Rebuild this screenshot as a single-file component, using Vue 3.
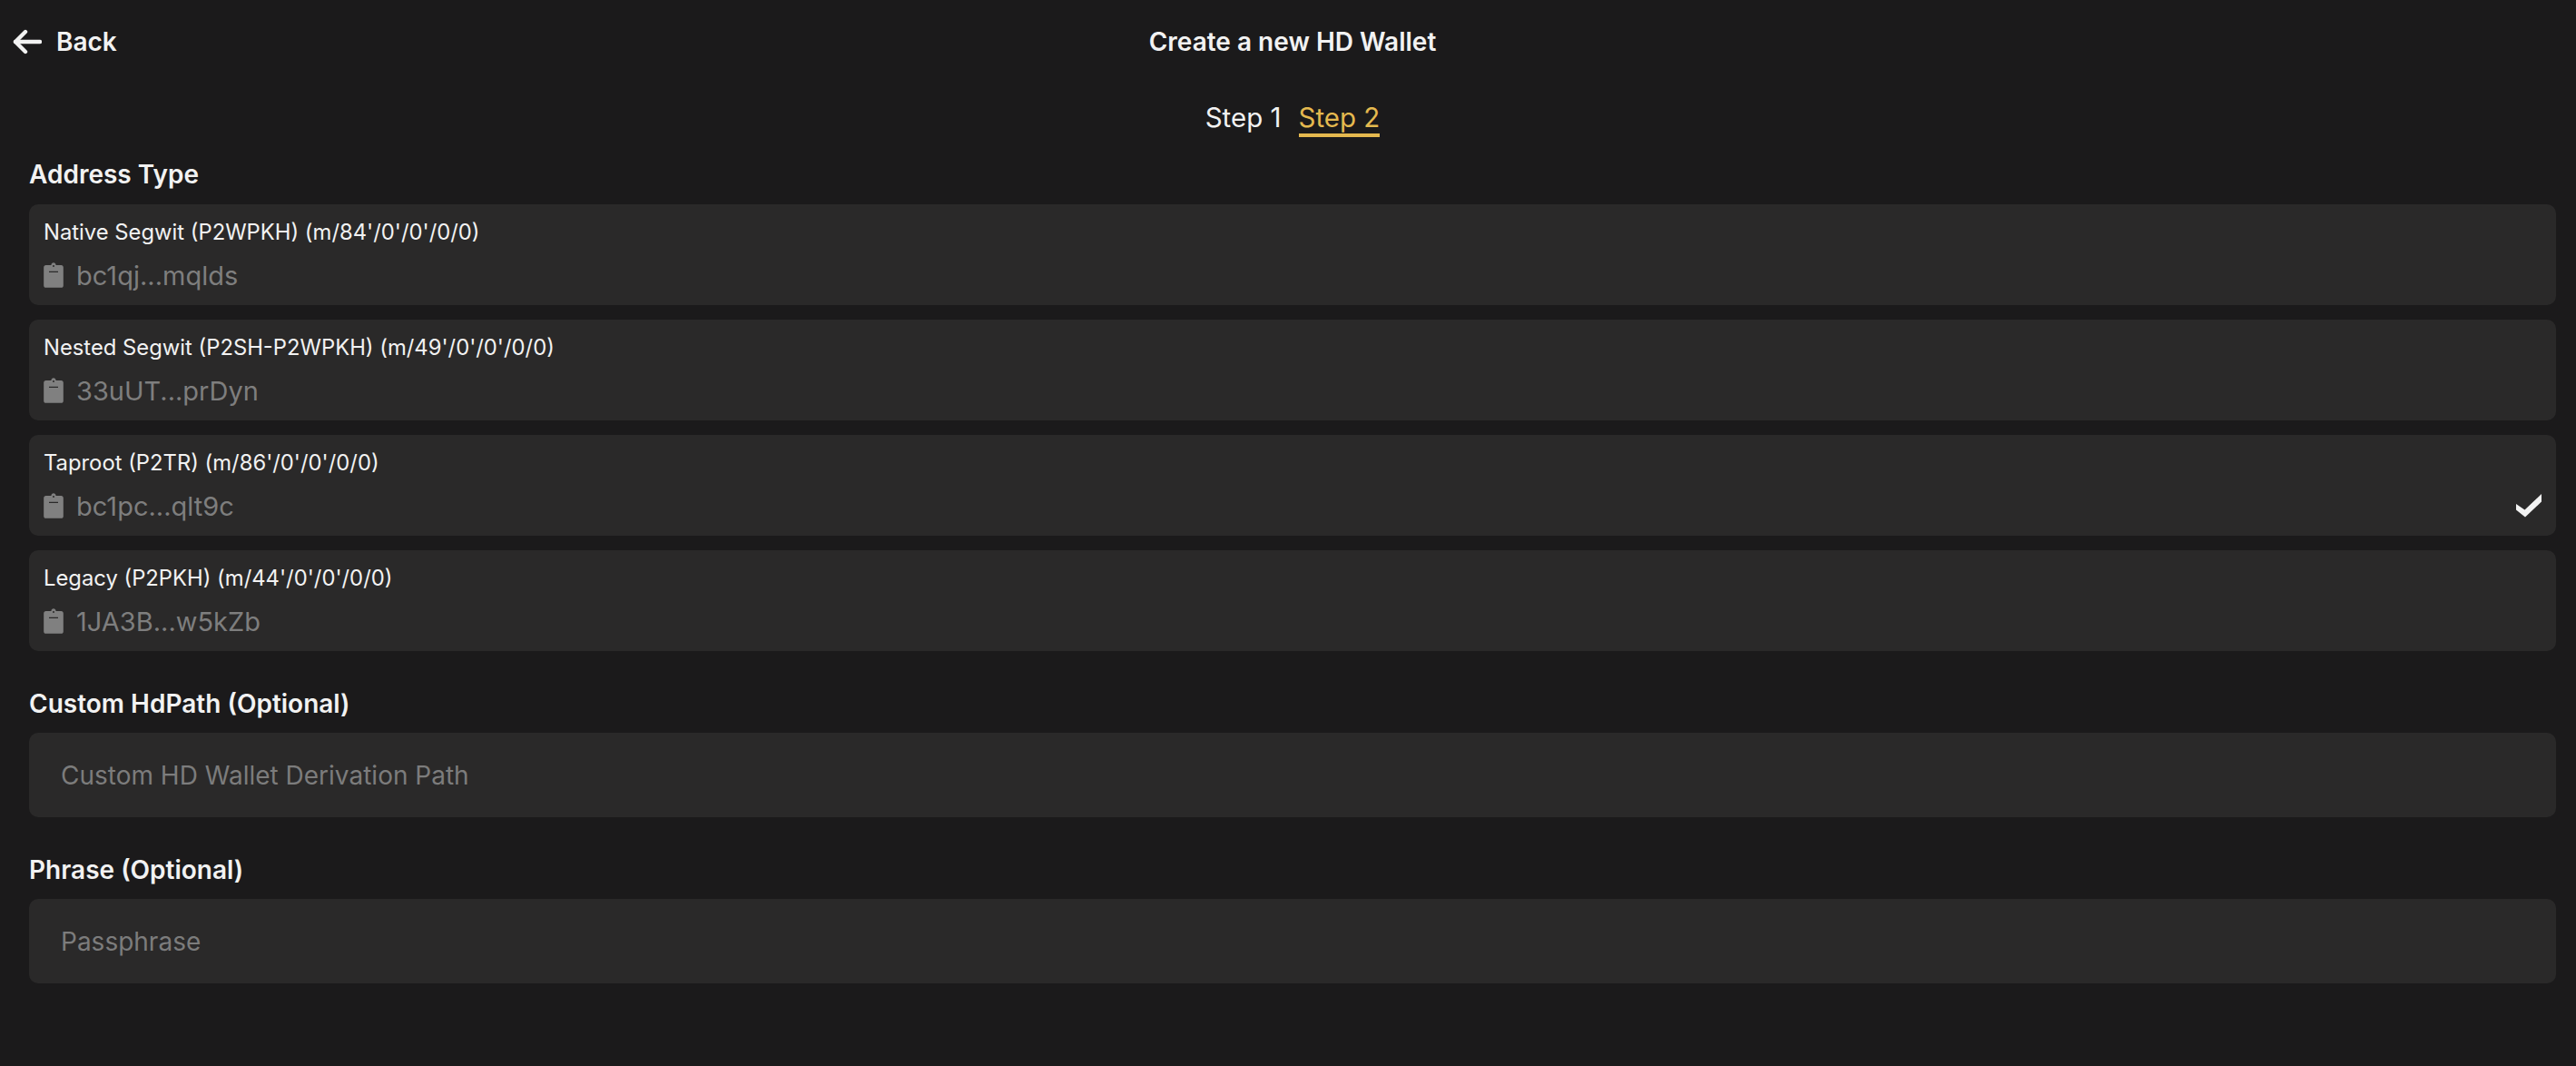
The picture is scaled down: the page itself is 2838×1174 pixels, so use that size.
<script setup>
const addressTypes = [
  { name: "Native Segwit (P2WPKH) (m/84'/0'/0'/0/0)", address: 'bc1qj...mqlds' },
  { name: "Nested Segwit (P2SH-P2WPKH) (m/49'/0'/0'/0/0)", address: '33uUT...prDyn' },
  { name: "Taproot (P2TR) (m/86'/0'/0'/0/0)", address: 'bc1pc...qlt9c', selected: true },
  { name: "Legacy (P2PKH) (m/44'/0'/0'/0/0)", address: '1JA3B...w5kZb' }
]
</script>

<template>
  <div class="page">
    <header class="header">
      <div class="back">
        <svg class="back-icon" viewBox="0 0 32 28" fill="none" stroke="currentColor" stroke-width="4.4" stroke-linecap="round" stroke-linejoin="round">
          <path d="M30 14H3" />
          <path d="M14 3L3 14l11 11" />
        </svg>
        <span>Back</span>
      </div>
      <h1 class="title">Create a new HD Wallet</h1>
    </header>

    <div class="tabs">
      <span class="tab">Step 1</span>
      <span class="tab active">Step 2</span>
    </div>

    <main class="content">
      <div class="label first">Address Type</div>
      <div class="list">
        <div v-for="item in addressTypes" :key="item.name" class="card">
          <div class="card-info">
            <div class="card-name">{{ item.name }}</div>
            <div class="card-address">
              <svg class="clip" viewBox="0 0 22 28">
                <path fill="#808080" fill-rule="evenodd" d="M8.4 3C8.6 1.4 9.6.3 11 .3s2.400 1.100 2.600 2.700H19.400c1.400 0 2.400 1 2.400 2.400v20c0 1.400-1 2.400-2.400 2.400H2.600c-1.400 0-2.400-1-2.400-2.400v-20C.2 4 1.200 3 2.600 3H8.400zM11 3a1 1 0 1 0 0 2 1 1 0 0 0 0-2zM6 9.800v1.300h10V9.800H6z" />
              </svg>
              <span>{{ item.address }}</span>
            </div>
          </div>
          <svg v-if="item.selected" class="check" viewBox="0 0 28 26">
            <path fill="#f2f2f2" d="M28 0v8.500L10 25.500 0 17.500V11l9.500 6.500z" />
          </svg>
        </div>
      </div>

      <div class="label">Custom HdPath (Optional)</div>
      <input class="field" type="text" placeholder="Custom HD Wallet Derivation Path" />

      <div class="label">Phrase (Optional)</div>
      <input class="field" type="text" placeholder="Passphrase" />
    </main>
  </div>
</template>

<style>
html,
body {
  margin: 0;
  background: #1b1a1b;
}
</style>

<style scoped>
.page {
  width: 2838px;
  height: 1174px;
  box-sizing: border-box;
  background: #1b1a1b;
  color: #f2f2f2;
  font-family: Inter, "Liberation Sans", sans-serif;
  overflow: hidden;
}

.header {
  display: grid;
  grid-template-columns: 1fr auto 1fr;
  align-items: center;
  height: 46px;
  padding: 23px 0 0 14px;
}

.back {
  display: flex;
  align-items: center;
  gap: 16px;
  font-size: 28px;
  font-weight: 600;
}

.back-icon {
  width: 32px;
  height: 28px;
}

.title {
  margin: 0;
  font-size: 28px;
  font-weight: 600;
  line-height: 46px;
  transform: translateX(-2px);
}

.tabs {
  display: flex;
  justify-content: center;
  gap: 19px;
  margin-top: 40px;
  padding-left: 10px;
  height: 42px;
  font-size: 29.5px;
  line-height: 40px;
}

.tab {
  height: 42px;
  box-sizing: border-box;
}

.active {
  color: #e5b94f;
  border-bottom: 4px solid #e5b94f;
}

.content {
  padding: 0 22px 0 32px;
}

.label {
  font-size: 28px;
  font-weight: 600;
  line-height: 40px;
  margin: 38px 0 12px;
}

.label.first {
  margin: 21px 0 13px;
}

.list {
  display: flex;
  flex-direction: column;
  gap: 16px;
}

.card {
  display: flex;
  justify-content: space-between;
  align-items: flex-end;
  height: 111px;
  box-sizing: border-box;
  padding: 15px 16px 15px;
  background: #2a2929;
  border-radius: 10px;
}

.card-name {
  font-size: 23.8px;
  line-height: 32px;
}

.card-address {
  display: flex;
  align-items: center;
  gap: 14px;
  margin-top: 15px;
  font-size: 29px;
  line-height: 34px;
  color: #7e7e7e;
}

.clip {
  width: 22px;
  height: 28px;
  margin-bottom: 3px;
}

.check {
  width: 28px;
  height: 26px;
  margin-bottom: 5px;
}

.field {
  display: block;
  width: 100%;
  height: 93px;
  box-sizing: border-box;
  padding: 0 35px;
  border: none;
  outline: none;
  border-radius: 10px;
  background: #2a2929;
  color: #f2f2f2;
  font-family: inherit;
  font-size: 28px;
}

.field::placeholder {
  color: #7c7c7c;
  opacity: 1;
}
</style>
